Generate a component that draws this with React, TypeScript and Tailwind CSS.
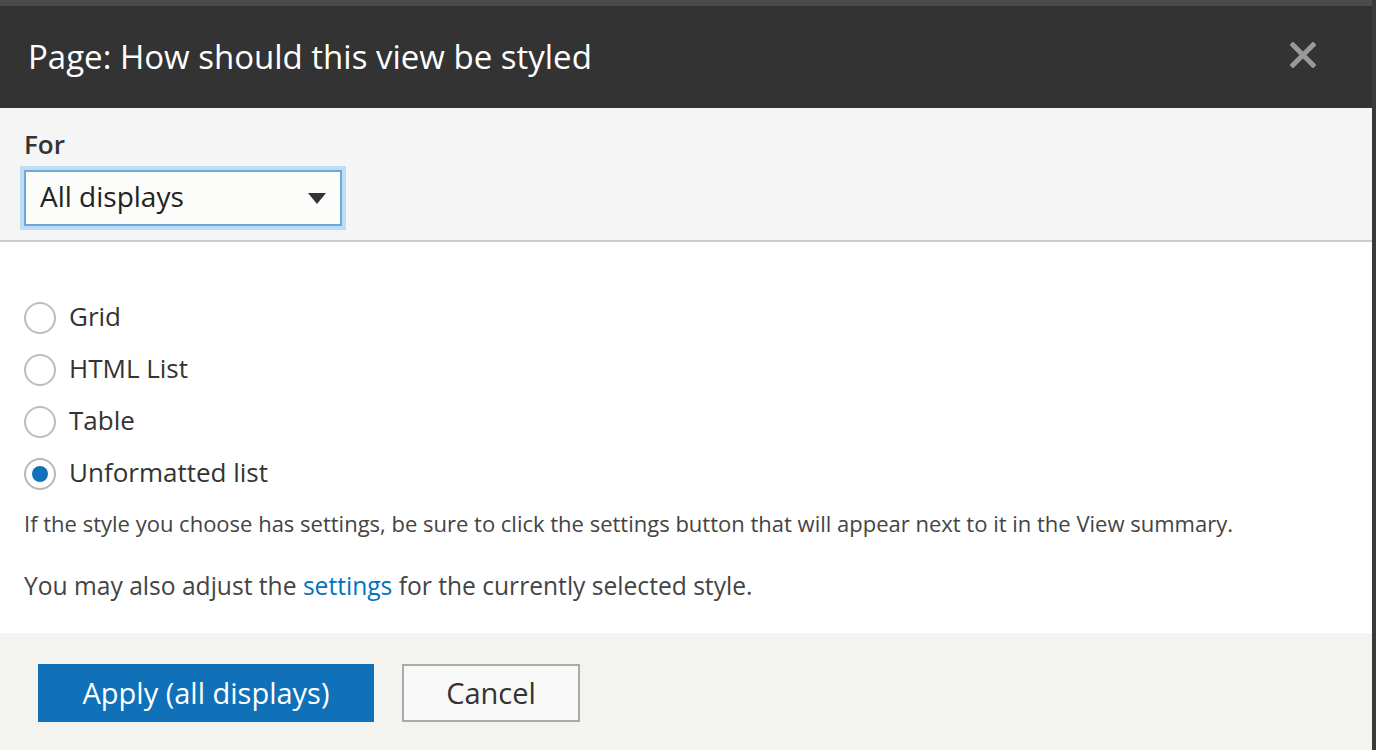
const STYLES = ["Grid", "HTML List", "Table", "Unformatted list"];

const Radio = ({ label, checked }: { label: string; checked?: boolean }) => (
  <label className="flex items-center h-[52px]">
    <span
      className={
        "w-[32px] h-[32px] rounded-full border-2 bg-white flex items-center justify-center " +
        (checked ? "border-[#b4b8bd]" : "border-[#bcbcbc]")
      }
    >
      {checked && <span className="w-[16px] h-[16px] rounded-full bg-[#1071b8]" />}
    </span>
    <span className="ml-[13px] text-[26px] text-[#333] pb-[3px]">{label}</span>
  </label>
);

export default function App() {
  return (
    <div
      className="w-[1376px] h-[750px] bg-[#4b4b4b] flex overflow-hidden"
      style={{ fontFamily: '"Open Sans", "Liberation Sans", sans-serif' }}
    >
      <div className="w-[1372px] mt-[6px] flex flex-col">
        {/* Title bar */}
        <div className="h-[102px] shrink-0 bg-[#333333] flex items-center justify-between pl-[28px] pr-[56px]">
          <h1 className="text-[33px] text-white leading-none pb-[2px]">
            Page: How should this view be styled
          </h1>
          <svg width="26" height="26" viewBox="0 0 26 26" className="mb-[4px]">
            <path d="M3 3 L23 23 M23 3 L3 23" stroke="#999" strokeWidth="5" strokeLinecap="square" />
          </svg>
        </div>

        {/* For selector */}
        <div className="h-[134px] shrink-0 bg-[#f5f5f5] border-b-2 border-[#cccccc] px-[20px] pt-[21px]">
          <div className="pl-[4px] text-[26px] font-semibold text-[#333] leading-[30px]">For</div>
          <div className="mt-[7px] w-[326px] h-[64px] bg-[#bddcf5] p-[4px]">
            <div className="h-full border-2 border-[#6fa8d6] bg-[#fcfcfa] flex items-center justify-between pl-[14px] pr-[14px]">
              <span className="text-[28px] text-[#222] pb-[5px]">All displays</span>
              <svg width="18" height="11" viewBox="0 0 18 11">
                <path d="M0 0 H18 L9 11 Z" fill="#333" />
              </svg>
            </div>
          </div>
        </div>

        {/* Options */}
        <div className="flex-1 bg-white px-[24px] pt-[50px]">
          {STYLES.map((s) => (
            <Radio key={s} label={s} checked={s === "Unformatted list"} />
          ))}
          <p className="mt-[8px] text-[22px] text-[#444] leading-[30px]">
            If the style you choose has settings, be sure to click the settings button that will appear next to it in the View summary.
          </p>
          <p className="mt-[33px] text-[24.6px] text-[#444] leading-[30px]">
            You may also adjust the <a className="text-[#0074bd]">settings</a> for the currently selected style.
          </p>
        </div>

        {/* Footer */}
        <div className="h-[117px] shrink-0 bg-[#f3f3f0] flex items-start pt-[31px] pl-[38px] gap-[28px]">
          <button className="w-[336px] h-[58px] bg-[#1071b8] text-white text-[29px]">Apply (all displays)</button>
          <button className="w-[178px] h-[58px] bg-[#f8f8f8] border-2 border-[#aaaaaa] text-[#333] text-[29px]">Cancel</button>
        </div>
      </div>
      <div className="flex-1 bg-[#3a3a3a]" />
    </div>
  );
}
